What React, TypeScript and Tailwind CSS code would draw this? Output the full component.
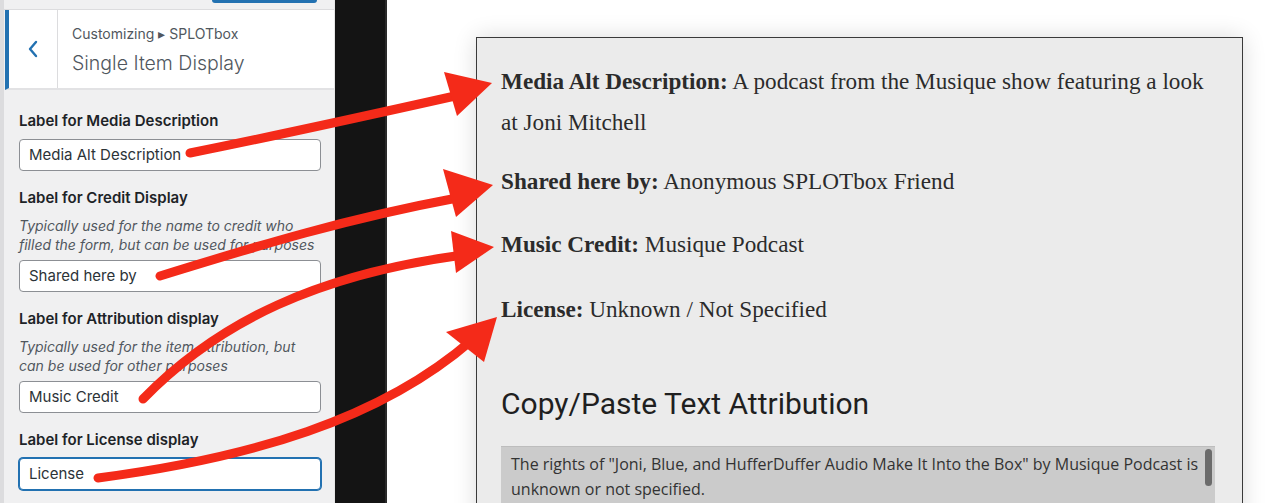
import React from "react";

const sans = { fontFamily: "Inter, 'Noto Sans', sans-serif" };
const serif = { fontFamily: "'Liberation Serif', serif" };
const roboto = { fontFamily: "Roboto, 'Noto Sans', sans-serif" };
const open = { fontFamily: "'Open Sans', 'Noto Sans', sans-serif" };

function Field({
  label,
  desc,
  value,
  focused,
  first,
}: {
  label: string;
  desc?: string[];
  value: string;
  focused?: boolean;
  first?: boolean;
}) {
  return (
    <div className={first ? "" : "mt-[17px]"}>
      <div className="text-[15px] leading-[20px] font-semibold text-[#1d2327] mb-[8px]">{label}</div>
      {desc && (
        <div className="text-[14px] leading-[19px] italic text-[#50575e] mb-[6px]">
          {desc.map((d, i) => (
            <div key={i}>{d}</div>
          ))}
        </div>
      )}
      <div
        className={
          "h-[32px] w-[302px] bg-white rounded-[4px] flex items-center px-[9px] text-[15px] text-[#2c3338] " +
          (focused
            ? "border border-[#2271b1] shadow-[0_0_0_1px_#2271b1]"
            : "border border-[#8c8f94]")
        }
      >
        {value}
      </div>
    </div>
  );
}

function Arrows() {
  const red = "#f42a19";
  return (
    <svg
      className="absolute inset-0 pointer-events-none"
      width={1280}
      height={503}
      viewBox="0 0 1280 503"
    >
      <path d="M190 153 C 280 135, 370 115, 455 96" stroke={red} strokeWidth={9} fill="none" strokeLinecap="round" />
      <polygon points="492,83 444,72 457,116" fill={red} />
      <path d="M160 276 C 260 245, 350 218, 452 199" stroke={red} strokeWidth={9} fill="none" strokeLinecap="round" />
      <polygon points="493,185 443,169 456,217" fill={red} />
      <path d="M143 399 C 220 320, 320 275, 456 256" stroke={red} strokeWidth={9} fill="none" strokeLinecap="round" />
      <polygon points="494,247 451,231 456,273" fill={red} />
      <path d="M98 478 C 250 458, 380 420, 472 340" stroke={red} strokeWidth={9} fill="none" strokeLinecap="round" />
      <polygon points="497,317 446,332 484,362" fill={red} />
    </svg>
  );
}

export default function App() {
  return (
    <div className="relative w-[1280px] h-[503px] overflow-hidden flex bg-white" style={sans}>
      {/* Left customizer panel */}
      <div className="w-[335px] h-full flex flex-col bg-[#f0f0f1] border-l-[4px] border-[#dcdcde] border-r border-r-[#e6e6e6]">
        <div className="h-[10px] relative border-b border-[#dcdcde] bg-[#f0f0f1]">
          <div className="absolute left-[208px] top-[-20px] w-[105px] h-[23px] rounded-[3px] bg-[#2271b1]" />
        </div>
        <div className="h-[80px] flex bg-white border-b-[2px] border-[#e2e2e4] border-l-[4px] border-l-[#2271b1] ml-[1px]">
          <div className="w-[49px] h-full flex items-center justify-center border-r border-[#dcdcde]">
            <svg width="12" height="18" viewBox="0 0 12 18">
              <polyline points="9,2 3,9 9,16" fill="none" stroke="#2271b1" strokeWidth="2.4" strokeLinecap="round" strokeLinejoin="round" />
            </svg>
          </div>
          <div className="pl-[14px] pt-[15px]">
            <div className="text-[14px] leading-[18px] text-[#50575e]">Customizing ▸ SPLOTbox</div>
            <div className="text-[19.5px] leading-[26px] font-light text-[#50575e] mt-[7px]">Single Item Display</div>
          </div>
        </div>
        <div className="pl-[15px] pt-[21px]">
          <Field first label="Label for Media Description" value="Media Alt Description" />
          <Field
            label="Label for Credit Display"
            desc={["Typically used for the name to credit who", "filled the form, but can be used for purposes"]}
            value="Shared here by"
          />
          <Field
            label="Label for Attribution display"
            desc={["Typically used for the item attribution, but", "can be used for other purposes"]}
            value="Music Credit"
          />
          <div className="mt-[1px]">
            <Field label="Label for License display" value="License" focused />
          </div>
        </div>
      </div>

      {/* dark strip */}
      <div className="w-[52px] h-full bg-[#141414] border-r-[2px] border-r-[#2a2a2a]" />

      {/* Right preview */}
      <div className="flex-1 h-full bg-white pl-[89px] pr-[37px] pt-[37px]">
        <div className="h-[520px] bg-[#ebebeb] border border-[#3a3a3a] shadow-[0_0_22px_rgba(0,0,0,0.14)] pl-[24px] pr-[25px] pt-[23px]">
          <div style={serif} className="text-[23.2px] leading-[41px] text-[#2b2b2b]">
            <p className="mb-[18px] whitespace-nowrap">
              <b>Media Alt Description:</b> A podcast from the Musique show featuring a look
              <br />
              at Joni Mitchell
            </p>
            <p className="mb-[22px]">
              <b>Shared here by:</b> Anonymous SPLOTbox Friend
            </p>
            <p className="mb-[24px]">
              <b>Music Credit:</b> Musique Podcast
            </p>
            <p>
              <b>License:</b> Unknown / Not Specified
            </p>
          </div>
          <div style={roboto} className="mt-[56px] text-[30px] leading-[36px] text-[#1f1f1f]">
            Copy/Paste Text Attribution
          </div>
          <div
            style={open}
            className="relative mt-[24px] w-[714px] h-[80px] bg-[#cbcbcb] border-t border-[#bdbdbd] px-[10px] pt-[5px] text-[16px] leading-[25px] text-[#333] whitespace-nowrap"
          >
            The rights of "Joni, Blue, and HufferDuffer Audio Make It Into the Box" by Musique Podcast is
            <br />
            unknown or not specified.
            <div className="absolute right-[3px] top-[2px] w-[7px] h-[37px] rounded-[4px] bg-[#6b6b6b]" />
          </div>
        </div>
      </div>

      <Arrows />
    </div>
  );
}
